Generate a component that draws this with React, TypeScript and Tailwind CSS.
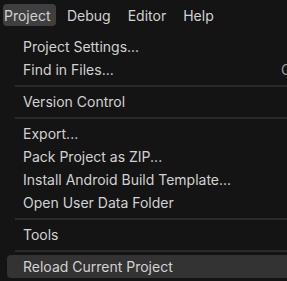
import React from "react";

type Entry = { label: string; shortcut?: string; active?: boolean } | "sep";

const entries: Entry[] = [
  { label: "Project Settings..." },
  { label: "Find in Files...", shortcut: "Ctrl+Shift+F" },
  "sep",
  { label: "Version Control" },
  "sep",
  { label: "Export..." },
  { label: "Pack Project as ZIP..." },
  { label: "Install Android Build Template..." },
  { label: "Open User Data Folder" },
  "sep",
  { label: "Tools" },
  "sep",
  { label: "Reload Current Project", active: true },
];

export default function App() {
  return (
    <div
      className="relative w-[287px] h-[281px] overflow-hidden bg-[#141414] text-[#d2d2d2] text-[14px] leading-[17px]"
      style={{ fontFamily: "Inter, 'Noto Sans', sans-serif" }}
    >
      <div className="flex items-center pt-[4px] pl-[3px]">
        <div className="h-[22px] w-[53px] pl-[1px] flex items-center rounded-[4px] bg-[#3f3f3f]">
          Project
        </div>
        <div className="h-[22px] ml-[11px] flex items-center">Debug</div>
        <div className="h-[22px] ml-[17px] flex items-center">Editor</div>
        <div className="h-[22px] ml-[17px] flex items-center">Help</div>
      </div>
      <div className="mt-[9px] w-[400px] flex flex-col">
        {entries.map((e, i) =>
          e === "sep" ? (
            <div key={i} className="h-[9px] pt-[4px] pl-[15px]">
              <div className="h-[2px] bg-[#2a2a2a]" />
            </div>
          ) : (
            <div
              key={i}
              className={
                "relative h-[23px] ml-[7px] pl-[16px] pr-[8px] flex items-center rounded-[4px] " +
                (e.active ? "bg-[#333333]" : "")
              }
            >
              <span className="whitespace-nowrap">{e.label}</span>
              {e.shortcut ? (
                <span className="whitespace-nowrap text-[#9a9a9a] absolute left-[274px]">{e.shortcut}</span>
              ) : null}
            </div>
          )
        )}
      </div>
    </div>
  );
}
